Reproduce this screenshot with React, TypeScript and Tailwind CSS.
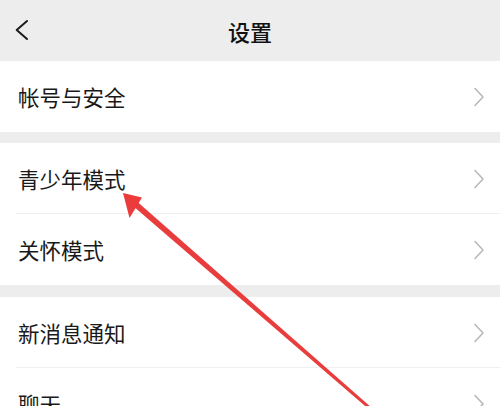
import React from "react";

const font = { fontFamily: '"Noto Sans CJK SC", "Noto Sans", sans-serif' };

function Chevron() {
  return (
    <svg width="12" height="20" viewBox="0 0 12 20" className="shrink-0">
      <polyline points="2,1.5 10,10 2,18.5" fill="none" stroke="#b9b9b9" strokeWidth="1.6" strokeLinecap="round" strokeLinejoin="round" />
    </svg>
  );
}

function Row({ label, divider }: { label: string; divider?: boolean }) {
  return (
    <div className="relative h-[71px] bg-white flex items-center justify-between pl-[18px] pr-[15px]">
      <span className="text-[21.5px] leading-none text-[#191919]">{label}</span>
      <Chevron />
      {divider && <div className="absolute left-[16px] right-0 bottom-0 h-px bg-[#efefef]" />}
    </div>
  );
}

export default function App() {
  return (
    <div className="relative w-[500px] h-[406px] overflow-hidden bg-[#ededed]" style={font}>
      <div className="h-[61px] grid grid-cols-[1fr_auto_1fr] items-center">
        <div className="pl-[14px] flex items-center">
          <svg width="16" height="24" viewBox="0 0 16 24">
            <polyline points="13,2 2.7,11 13,20" fill="none" stroke="#1c1c1c" strokeWidth="2" strokeLinecap="round" strokeLinejoin="round" />
          </svg>
        </div>
        <div className="text-[22px] font-medium text-[#111] leading-none">设置</div>
        <div />
      </div>
      <Row label="帐号与安全" />
      <div className="h-[11px]" />
      <Row label="青少年模式" divider />
      <Row label="关怀模式" />
      <div className="h-[12px]" />
      <Row label="新消息通知" divider />
      <Row label="聊天" />
      <svg className="absolute inset-0 pointer-events-none" width="500" height="406" viewBox="0 0 500 406">
        <polygon points="131,204.3 135,199.7 373,408.9 371,411.1" fill="#e93c3c" />
        <polygon points="123,193 142,197.5 129.5,218" fill="#ec3b3b" />
      </svg>
    </div>
  );
}
